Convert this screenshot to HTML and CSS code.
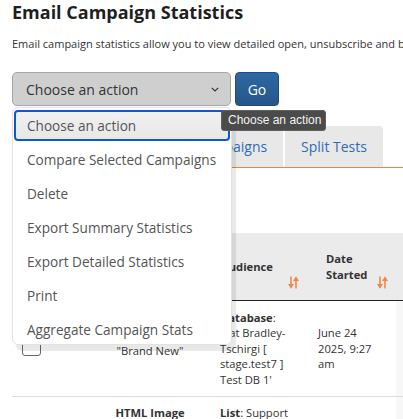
FILE: index.html
```html
<!DOCTYPE html>
<html lang="en">
<head>
<meta charset="utf-8">
<title>Email Campaign Statistics</title>
<link rel="stylesheet" href="styles.css">
</head>
<body>
<div class="page">
  <h1 class="title">Email Campaign Statistics</h1>
  <p class="desc">Email campaign statistics allow you to view detailed open, unsubscribe and bounce information for each of your sent campaigns.</p>

  <div class="actions">
    <div class="select">
      <span>Choose an action</span>
      <svg class="chev" width="8" height="5" viewBox="0 0 8 5"><polyline points="0.8,0.8 4,4 7.2,0.8" fill="none" stroke="#333" stroke-width="1.2"/></svg>
    </div>
    <button class="go">Go</button>
  </div>

  <div class="tabs">
    <div class="tab"></div>
    <div class="tab">Campaigns</div>
    <div class="tab">Split Tests</div>
  </div>

  <div class="table">
    <div class="row head">
      <div class="cell c1"></div>
      <div class="cell c2"></div>
      <div class="cell c3 hsort"><span>Audience</span>
        <svg class="sort" width="11" height="13" viewBox="0 0 11 13"><line x1="3" y1="0.5" x2="3" y2="9" stroke="#f5844a" stroke-width="1.6"/><polygon points="0,8 6,8 3,12.8" fill="#f5844a"/><line x1="8" y1="4" x2="8" y2="12.5" stroke="#f5844a" stroke-width="1.6"/><polygon points="5,5 11,5 8,0.2" fill="#f5844a"/></svg>
      </div>
      <div class="cell c4 hsort"><span>Date Started</span>
        <svg class="sort" width="11" height="13" viewBox="0 0 11 13"><line x1="3" y1="0.5" x2="3" y2="9" stroke="#f5844a" stroke-width="1.6"/><polygon points="0,8 6,8 3,12.8" fill="#f5844a"/><line x1="8" y1="4" x2="8" y2="12.5" stroke="#f5844a" stroke-width="1.6"/><polygon points="5,5 11,5 8,0.2" fill="#f5844a"/></svg>
      </div>
      <div class="cell c5"></div>
    </div>

    <div class="row r1">
      <div class="cell c1"><span class="check"></span></div>
      <div class="cell c2 name"><span>"Brand New"</span></div>
      <div class="cell c3"><span><b>Database</b>: 'Pat Bradley-Tschirgi [ stage.test7 ] Test DB 1'</span></div>
      <div class="cell c4"><span>June 24 2025, 9:27 am</span></div>
      <div class="cell c5 light"></div>
    </div>

    <div class="row r2">
      <div class="cell c1"></div>
      <div class="cell c2 name"><b>HTML Image</b></div>
      <div class="cell c3"><span><b>List</b>: Support</span></div>
      <div class="cell c4"></div>
      <div class="cell c5 light"></div>
    </div>
  </div>
</div>

<div class="dropdown">
  <div class="opt sel">Choose an action</div>
  <div class="opt">Compare Selected Campaigns</div>
  <div class="opt">Delete</div>
  <div class="opt">Export Summary Statistics</div>
  <div class="opt">Export Detailed Statistics</div>
  <div class="opt">Print</div>
  <div class="opt">Aggregate Campaign Stats</div>
</div>
<div class="tooltip">Choose an action</div>
</body>
</html>
```

FILE: styles.css
```css
html, body {
  margin: 0;
  padding: 0;
  overflow: hidden;
  background: #fff;
}
body {
  font-family: "Open Sans", "DejaVu Sans", sans-serif;
  color: #333;
  width: 403px;
  height: 419px;
  position: relative;
}
.page {
  padding: 0 0 0 12px;
  width: 600px;
}
.title {
  margin: 0;
  font-size: 18px;
  line-height: 25px;
  font-weight: 700;
  color: #1f1f1f;
}
.desc {
  margin: 10.5px 0 0;
  font-size: 11px;
  line-height: 15px;
  white-space: nowrap;
  color: #333;
}
.actions {
  margin-top: 21.5px;
  display: flex;
  gap: 4px;
  height: 34px;
}
.select {
  box-sizing: border-box;
  width: 219px;
  height: 34px;
  border: 1px solid #a6a6a6;
  border-radius: 5px;
  background: #cfcfcf;
  display: flex;
  align-items: center;
  justify-content: space-between;
  padding: 0 11px 0 13px;
  font-size: 14px;
  color: #333;
}
.chev { display: block; margin-top: 1px; }
.go {
  box-sizing: border-box;
  width: 44px;
  height: 34px;
  border: 1px solid #1f4b7c;
  border-radius: 4px;
  background: linear-gradient(#2f68a3, #25568a);
  color: #fff;
  font-family: "Open Sans", sans-serif;
  font-size: 14px;
  padding: 0;
}
.tabs {
  margin-top: 20px;
  display: grid;
  grid-template-columns: 165px 104px 98px;
  column-gap: 2px;
  border-bottom: 1px solid #e38a3b;
  width: 391px;
}
.tab {
  height: 41px;
  background: #e8e8e8;
  border-radius: 4px 4px 0 0;
  display: flex;
  align-items: center;
  justify-content: center;
  font-size: 14px;
  color: #2f6db3;
}
.table {
  margin-top: 65px;
  font-size: 11.2px;
  line-height: 15.6px;
  color: #333;
}
.row {
  display: grid;
  grid-template-columns: 88px 100px 110px 86px 200px;
}
.head {
  background: #ebebeb;
  height: 67px;
  border-bottom: 1px solid #222;
  font-weight: 700;
}
.head .cell {
  display: flex;
  align-items: center;
}
.hsort {
  justify-content: space-between;
}
.hsort .sort {
  align-self: flex-end;
  margin-bottom: 11px;
  flex: none;
}
.head .c3 { padding: 0 11px 0 21px; }
.head .c4 { padding: 0 8px 0 16px; }
.head .c4 span { width: 45px; }
.r1 {
  border-bottom: 1px solid #dcdcdc;
}
.r1 .cell {
  padding: 8.5px 0;
  display: flex;
  align-items: center;
}
.r2 .cell {
  padding: 8px 0;
  display: flex;
  align-items: flex-start;
  min-height: 60px;
}
.cell.c1 { padding-left: 10px; }
.row .cell.name {
  flex-direction: column;
  align-items: center;
  text-align: center;
  justify-content: center;
}
.r1 .name { padding-top: 14px; }
.r2 .cell.name { justify-content: flex-start; }
.row .cell.c3:not(.hsort) { padding-left: 20px; padding-right: 18px; }
.row .cell.c4:not(.hsort) { padding-left: 8px; padding-right: 16px; }
.light { background: #f7f7f7; }
.check {
  box-sizing: border-box;
  display: block;
  width: 19px;
  height: 18px;
  border: 1.3px solid #666;
  border-radius: 3px;
  background: #fff;
  margin-top: -2px;
}
.dropdown {
  position: absolute;
  left: 12px;
  top: 107px;
  width: 220px;
  height: 238px;
  box-sizing: border-box;
  background: #fff;
  border: 1px solid #e2e2e2;
  border-radius: 6px;
  box-shadow: 4px 6px 1px rgba(0, 0, 0, 0.09);
  padding: 1px;
  font-size: 13.6px;
  color: #555;
}
.opt {
  height: 34px;
  line-height: 34px;
  padding-left: 13px;
  box-sizing: border-box;
  white-space: nowrap;
}
.opt.sel {
  margin: 1px 0 2px;
  height: 31px;
  line-height: 27px;
  border: 2px solid #0b5bc6;
  border-radius: 4px;
  background: linear-gradient(#f0f0f0, #e8e8e8);
  padding-left: 11px;
}
.tooltip {
  position: absolute;
  left: 221px;
  top: 110px;
  width: 105px;
  height: 21px;
  box-sizing: border-box;
  background: #4b4b4b;
  border: 1px solid #5f5f5f;
  border-radius: 3px;
  color: #f2f2f2;
  font-family: "Liberation Sans", Arial, sans-serif;
  font-size: 12px;
  line-height: 19px;
  padding-left: 6px;
  white-space: nowrap;
}
```
